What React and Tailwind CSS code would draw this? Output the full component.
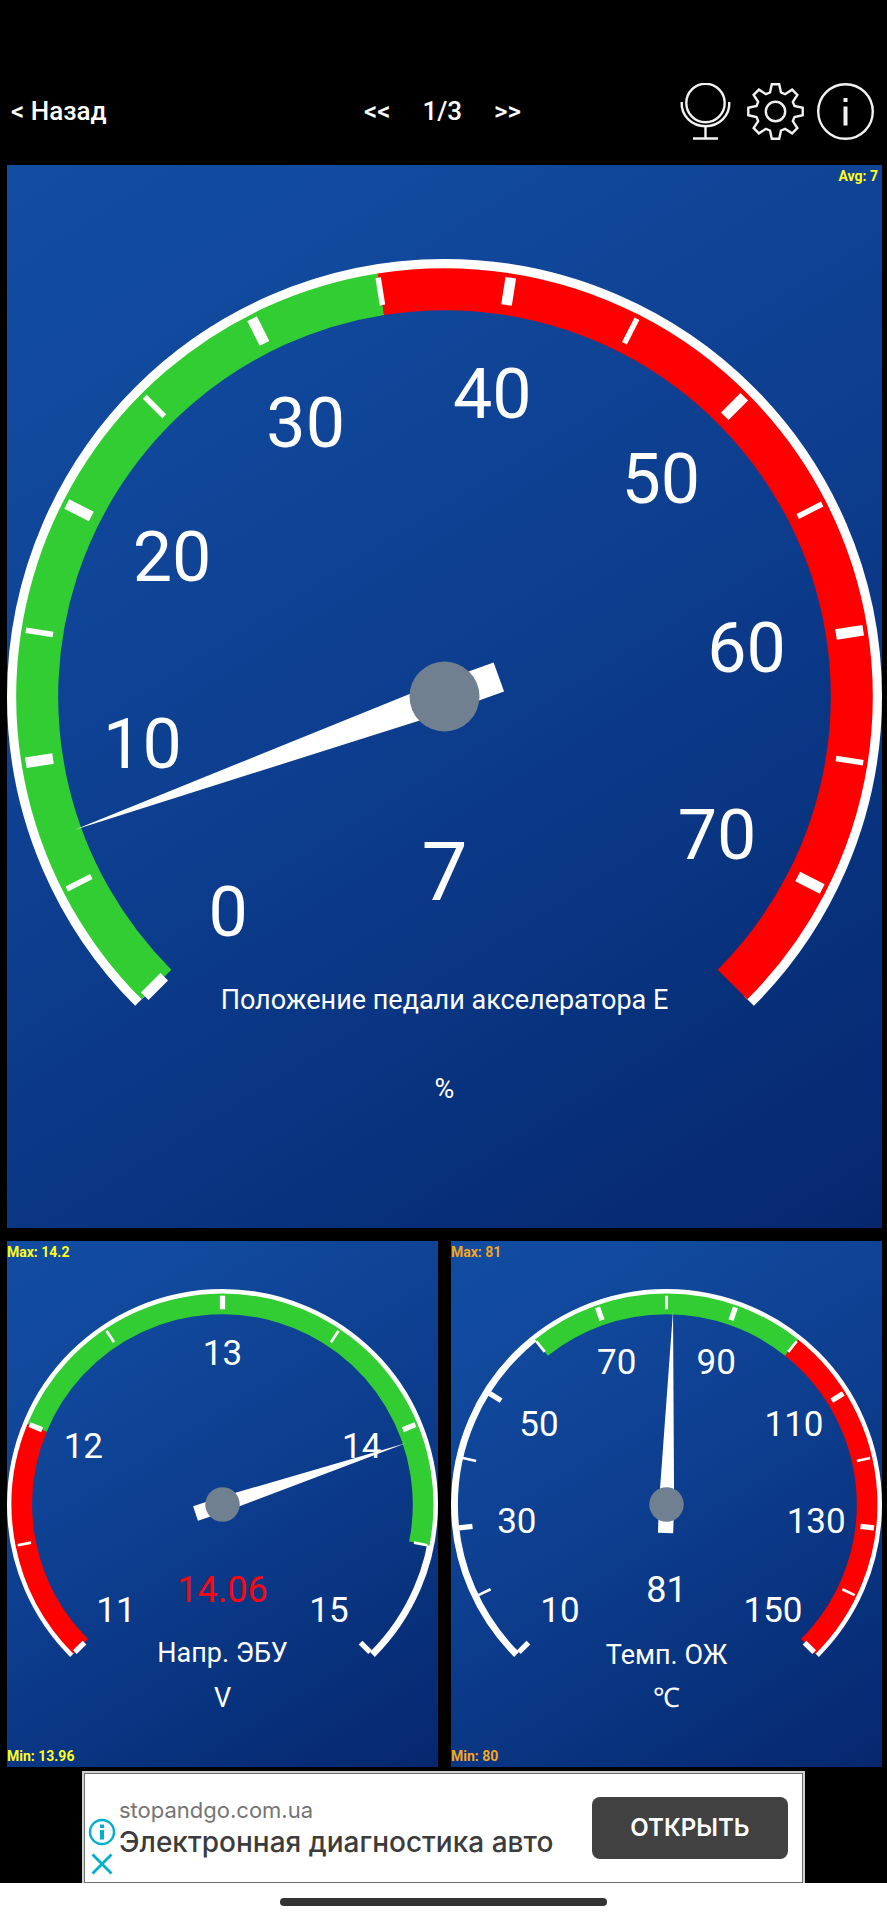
import React from 'react';

const START = -135;
const SWEEP = 270;

const COLORS = { green: '#32cd32', red: '#ff0000' };

// angle is in degrees, clockwise from twelve o'clock
const polar = (c, r, angle) => {
  const a = (angle * Math.PI) / 180;
  return [c + r * Math.sin(a), c - r * Math.cos(a)];
};

const arc = (c, r, from, to) => {
  const [x1, y1] = polar(c, r, from);
  const [x2, y2] = polar(c, r, to);
  return `M${x1} ${y1}A${r} ${r} 0 ${to - from > 180 ? 1 : 0} 1 ${x2} ${y2}`;
};

const gauges = {
  pedal: {
    size: 875,
    min: 0,
    max: 75,
    step: 5,
    majorEvery: 2,
    lastTick: 70,
    value: 7,
    title: 'Положение педали акселератора E',
    unit: '%',
    labels: [0, 10, 20, 30, 40, 50, 60, 70],
    bands: [
      { from: 0, to: 35, color: COLORS.green },
      { from: 35, to: 75, color: COLORS.red },
    ],
    labelClass: 'text-[70px]',
    valueClass: 'text-[82px] fill-white',
    titleClass: 'text-[27px]',
    titleY: 750,
    unitY: 839,
    valueY: 641,
  },
  voltage: {
    size: 431,
    min: 11,
    max: 15,
    step: 0.5,
    majorEvery: 2,
    lastTick: 15,
    value: 14.06,
    title: 'Напр. ЭБУ',
    unit: 'V',
    labels: [11, 12, 13, 14, 15],
    bands: [
      { from: 11, to: 12, color: COLORS.red },
      { from: 12, to: 14.5, color: COLORS.green },
    ],
    labelClass: 'text-[35px]',
    valueClass: 'text-[36px] fill-[#f50a14]',
    titleClass: 'text-[27px]',
    titleY: 373,
    unitY: 418,
    valueY: 313,
  },
  coolant: {
    size: 431,
    min: 10,
    max: 150,
    step: 10,
    majorEvery: 2,
    lastTick: 150,
    value: 81,
    title: 'Темп. ОЖ',
    unit: '℃',
    labels: [10, 30, 50, 70, 90, 110, 130, 150],
    bands: [
      { from: 60, to: 100, color: COLORS.green },
      { from: 100, to: 150, color: COLORS.red },
    ],
    labelClass: 'text-[35px]',
    valueClass: 'text-[36px] fill-white',
    titleClass: 'text-[27px]',
    titleY: 375,
    unitY: 418,
    valueY: 313,
  },
};

const Gauge = ({ gauge }) => {
  const { size, min, max, step, majorEvery, lastTick, value } = gauge;
  const c = size / 2;
  const R = size / 2;
  const toAngle = (v) => START + ((v - min) / (max - min)) * SWEEP;

  const ticks = [];
  for (let i = 0; min + i * step <= lastTick; i++) {
    ticks.push({ angle: toAngle(min + i * step), major: i % majorEvery === 0 });
  }

  const half = R * 0.0353;
  const needle = [
    [c, c - R * 0.9],
    [c + half, c],
    [c + half, c + R * 0.132],
    [c - half, c + R * 0.132],
    [c - half, c],
  ];
  const labelShift = R * 0.053;

  return (
    <svg viewBox={`0 0 ${size} ${size}`} className="block w-full" role="img" aria-label={gauge.title}>
      <path d={arc(c, R * 0.984, START, START + SWEEP)} fill="none" stroke="white" strokeWidth={R * 0.032} />
      {gauge.bands.map((band) => (
        <path
          key={band.from}
          d={arc(c, R * 0.931, toAngle(band.from), toAngle(band.to))}
          fill="none"
          stroke={band.color}
          strokeWidth={R * 0.096}
        />
      ))}
      {ticks.map((tick) => (
        <line
          key={tick.angle}
          x1={c}
          x2={c}
          y1={c - R * 0.969}
          y2={c - R * 0.906}
          stroke="white"
          strokeWidth={tick.major ? R * 0.0245 : R * 0.0125}
          transform={`rotate(${tick.angle} ${c} ${c})`}
        />
      ))}
      <g className="fill-white" textAnchor="middle">
        {gauge.labels.map((label) => {
          const [x, y] = polar(c, R * 0.699, toAngle(label));
          return (
            <text key={label} x={x} y={y + labelShift} className={gauge.labelClass}>
              {label}
            </text>
          );
        })}
        <text x={c} y={gauge.titleY} className={gauge.titleClass}>
          {gauge.title}
        </text>
        <text x={c} y={gauge.unitY} className={gauge.titleClass}>
          {gauge.unit}
        </text>
      </g>
      <text x={c} y={gauge.valueY} textAnchor="middle" className={gauge.valueClass}>
        {value}
      </text>
      <polygon
        points={needle.map((p) => p.join(',')).join(' ')}
        fill="white"
        transform={`rotate(${toAngle(value)} ${c} ${c})`}
      />
      <circle cx={c} cy={c} r={R * 0.08} fill="#708090" />
    </svg>
  );
};

const Panel = ({ className, children }) => (
  <section
    className={`relative bg-[linear-gradient(148deg,#124da2_0%,#114a9e_15%,#0d3d8e_50%,#08327d_76%,#06276e_100%)] ${className}`}
  >
    {children}
  </section>
);

const MicIcon = () => (
  <svg viewBox="0 0 57 57" className="size-[57px]" fill="none" stroke="#f2f2f2" strokeWidth="2.4">
    <circle cx="28.5" cy="20" r="19.2" />
    <path d="M4.7 19C4 33 15 43.200 28.500 43.200S53 33 52.300 19" />
    <path d="M28.500 43V55M16 55.500H41" />
  </svg>
);

const GearIcon = () => {
  const points = [];
  for (let i = 0; i < 8; i++) {
    const a = (i * Math.PI) / 4;
    [[-5.5, -19], [-3.7, -27.2], [3.7, -27.2], [5.5, -19]].forEach(([x, y]) => {
      points.push(`${28.5 + x * Math.cos(a) - y * Math.sin(a)},${28.5 + x * Math.sin(a) + y * Math.cos(a)}`);
    });
  }
  return (
    <svg viewBox="0 0 57 57" className="size-[57px]" fill="none" stroke="#f2f2f2" strokeWidth="2.4">
      <polygon points={points.join(' ')} />
      <circle cx="28.5" cy="28.5" r="9.7" />
    </svg>
  );
};

const InfoIcon = () => (
  <svg viewBox="0 0 57 57" className="size-[57px]" fill="none" stroke="#f2f2f2" strokeWidth="2.4">
    <circle cx="28.5" cy="28.5" r="27.3" />
    <path d="M28.500 15V19M28.500 23.500V42.500" strokeWidth="4" />
  </svg>
);

const Header = () => (
  <header className="grid h-[165px] grid-cols-[1fr_auto_1fr] items-center pt-[57px] pr-[13px] pl-[11px] text-[26px] font-medium text-white">
    <button className="justify-self-start">&lt; Назад</button>
    <nav className="flex items-center gap-8">
      <button>&lt;&lt;</button>
      <span>1/3</span>
      <button>&gt;&gt;</button>
    </nav>
    <div className="flex justify-end gap-[13px]">
      <button aria-label="Голос">
        <MicIcon />
      </button>
      <button aria-label="Настройки">
        <GearIcon />
      </button>
      <button aria-label="Информация">
        <InfoIcon />
      </button>
    </div>
  </header>
);

const AdBanner = () => (
  <aside className="mx-auto mt-1 w-[723px] max-w-full border-2 border-b-0 border-[#d0d0d0] bg-white">
    <div className="flex h-[110px] items-center border border-[#6f6f6f] pr-3.5">
      <div className="flex w-[34px] flex-col items-center gap-1 self-end pb-1">
        <button aria-label="О рекламе">
          <svg viewBox="0 0 28 28" className="block size-7" fill="none" stroke="#00aecd" strokeWidth="2.4">
            <circle cx="14" cy="14" r="12" />
            <path d="M14 6.500V10M14 12V21.500" strokeWidth="4" />
          </svg>
        </button>
        <button aria-label="Закрыть">
          <svg viewBox="0 0 28 28" className="block size-7" fill="none" stroke="#00aecd" strokeWidth="2.8">
            <path d="M4.500 4.500L23.500 23.500M23.500 4.500L4.500 23.500" />
          </svg>
        </button>
      </div>
      <div className="flex-1 pb-1 font-['Inter',sans-serif]">
        <p className="text-[22px] leading-8 text-[#757575]">stopandgo.com.ua</p>
        <p className="text-[28px] leading-8 font-medium text-[#3c3c3c]">Электронная диагностика авто</p>
      </div>
      <button className="h-[62px] w-[196px] rounded-lg bg-[#414141] font-['Inter',sans-serif] text-2xl font-semibold text-white">
        ОТКРЫТЬ
      </button>
    </div>
  </aside>
);

export default function App() {
  return (
    <div className="min-h-screen bg-black font-['Roboto',sans-serif]">
      <Header />
      <main className="grid grid-cols-2 gap-[13px] pr-[5px] pl-[7px]">
        <Panel className="col-span-2 py-[94px]">
          <span className="absolute top-px right-1 text-sm font-bold text-[#ffff1e]">Avg: 7</span>
          <Gauge gauge={gauges.pedal} />
        </Panel>
        <Panel className="pt-12 pb-[47px] text-sm font-bold text-[#ffff1e]">
          <span className="absolute top-px left-0">Max: 14.2</span>
          <div className="font-normal">
            <Gauge gauge={gauges.voltage} />
          </div>
          <span className="absolute bottom-px left-0">Min: 13.96</span>
        </Panel>
        <Panel className="pt-12 pb-[47px] text-sm font-bold text-[#f5a51e]">
          <span className="absolute top-px left-0">Max: 81</span>
          <div className="font-normal">
            <Gauge gauge={gauges.coolant} />
          </div>
          <span className="absolute bottom-px left-0">Min: 80</span>
        </Panel>
      </main>
      <AdBanner />
      <footer className="flex h-[37px] justify-center bg-white pt-[15px]">
        <div className="h-2 w-[327px] rounded-full bg-[#333333]" />
      </footer>
    </div>
  );
}
